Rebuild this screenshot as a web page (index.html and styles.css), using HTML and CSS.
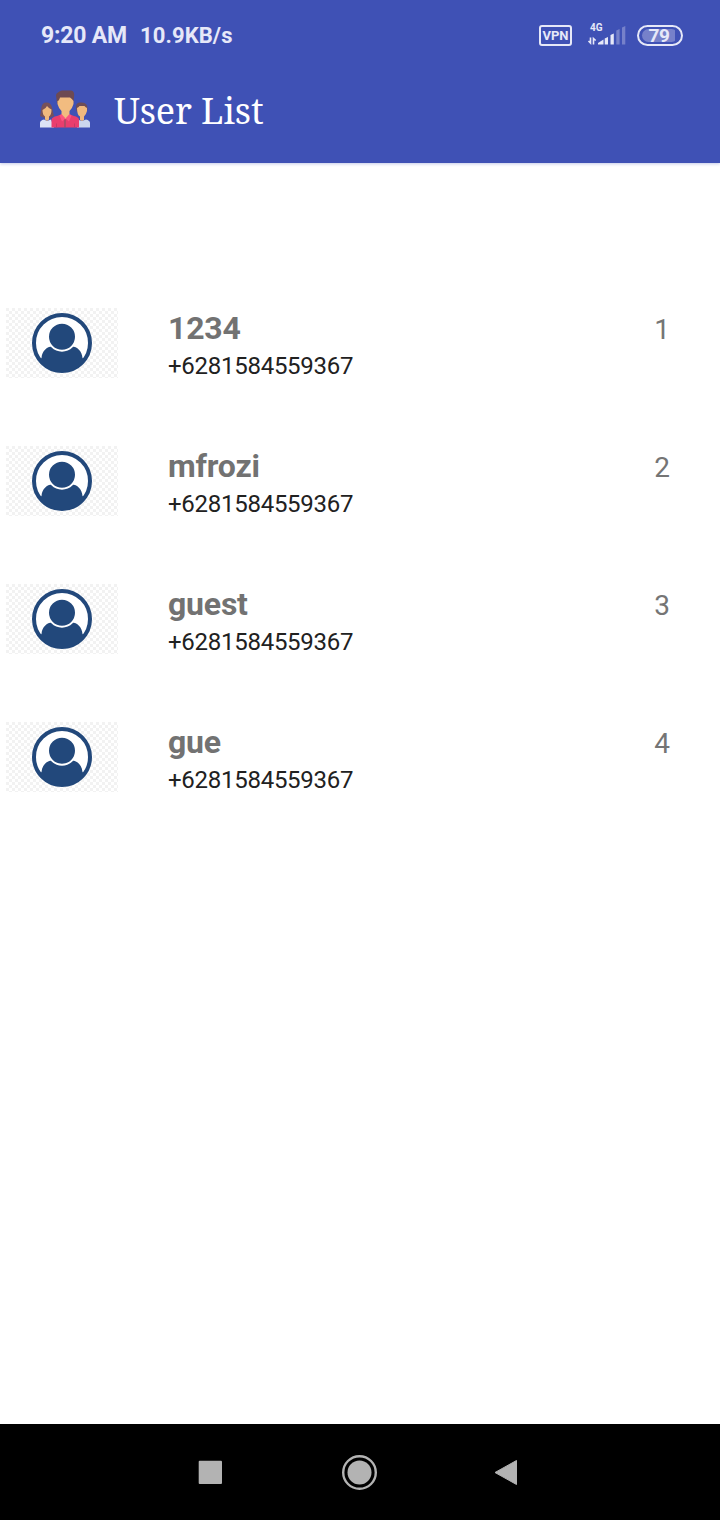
FILE: index.html
```html
<!DOCTYPE html>
<html lang="en">
<head>
<meta charset="utf-8">
<title>User List</title>
<link rel="stylesheet" href="styles.css">
</head>
<body>
<svg class="defs" aria-hidden="true">
  <defs>
    <pattern id="checks" width="6" height="6" patternUnits="userSpaceOnUse">
      <path d="M0 0h3v3H0zM3 3h3v3H3z" fill="#f2f2f2"/>
    </pattern>
    <clipPath id="disc"><circle cx="56" cy="35" r="29"/></clipPath>
    <symbol id="avatar" viewBox="0 0 112 70">
      <rect width="112" height="70" fill="url(#checks)"/>
      <circle cx="56" cy="35" r="28" fill="#fff" stroke="#22487b" stroke-width="4"/>
      <path clip-path="url(#disc)" d="M35.500 50C36 43 41 38.500 46 38.500Q50 38.500 56 41Q62 38.500 66 38.500C71 38.500 76 43 76.500 50L82 55V66H30V55z" fill="#22487b"/>
      <circle cx="56" cy="28.700" r="14" fill="#22487b" stroke="#fff" stroke-width="2"/>
    </symbol>
  </defs>
</svg>
<div class="screen">
  <header class="top">
    <div class="status">
      <span class="clock">9:20 AM</span>
      <span class="speed">10.9KB/s</span>
      <div class="indicators">
        <span class="vpn">VPN</span>
        <div class="network">
          <span class="gen">4G</span>
          <svg class="signal" width="38" height="20" viewBox="0 0 38 20">
            <path d="M0.500 14L2.500 16V10.500M5.500 17.500V11.500L7.700 13.500" fill="none" stroke="#e6e8f8" stroke-width="1.600"/>
            <path d="M10 17.500V16L15.500 12.500V17.500z" fill="#e6e8f8"/>
            <path d="M16.700 11.500L20 10V17.500H16.700zM22.500 8L25.800 6.500V17.500H22.500z" fill="#e6e8f8"/>
            <path d="M28.300 3.500L31.600 2V17.500H28.300zM34 0.500L37.300 -1V17.500H34z" fill="#7681ca"/>
          </svg>
        </div>
        <div class="battery"><span class="level">79</span></div>
      </div>
    </div>
    <div class="toolbar">
      <svg class="logo" width="52" height="40" viewBox="0 0 52 40">
        <path d="M1 37.500V33Q1 30.500 5 29.500L8 31L12 29.500L15 37.500z" fill="#dbe3f6"/>
        <path d="M38 37.500V29.500L43 31L47 29.500Q51 30.500 51 33V37.500z" fill="#cbd6ef"/>
        <path d="M1 26C3 20 1 12.500 7.500 12.500C14 12.500 13 20 15 26Q8 30 1 26z" fill="#77515a"/>
        <path d="M3.500 20Q7 18.500 8 16Q10 18.500 12.500 19.500Q12.500 25 10 26.500V29.500L8 31L6 29.500V26.500Q3.500 25 3.500 20z" fill="#f0b97e"/>
        <path d="M37.500 21L37 17Q37 12.500 41 12.500Q49 11.500 48.500 19L47.500 22H38.500z" fill="#6d4d57"/>
        <path d="M38 18Q40 17 40.500 16H45.500Q46 17 48 18V21Q47 25 45 26.500V30L43 31L41 30V26.500Q38 25 38 18z" fill="#f0b97e"/>
        <path d="M18 13L17 5Q18 2 23 0.500H32Q36 1 35 7L34 15H19z" fill="#6d4a53"/>
        <path d="M12.500 37.500V29.500Q13 27 18 26L22 24.500L26.500 27.500L31 24.500L35 26Q39.500 27 40 29.500V37.500z" fill="#e93e6e"/>
        <path d="M18.500 11Q20 11 21 7.500H31Q33 8.500 34.500 11V14Q33.500 18 30.500 21V25.500L26.500 29L22.500 25.500V21Q19.500 18 18.500 14z" fill="#f2bc80"/>
        <path d="M22.500 24L26.500 28.500L23 31.500L20.500 25.500zM30.500 24L26.500 28.500L30 31.500L32.500 25.500z" fill="#fb557f"/>
        <path d="M26 29.500V37.500" stroke="#8b5363" stroke-width="1.200"/>
        <path d="M17.500 33.500V37.500M35.500 33.500V37.500" stroke="#c23b66"/>
      </svg>
      <h1 class="title">User List</h1>
    </div>
  </header>
  <main class="list">
    <article class="user"><svg class="avatar"><use href="#avatar"/></svg><div class="info"><h2 class="name">1234</h2><p class="phone">+6281584559367</p></div><span class="index">1</span></article>
    <article class="user"><svg class="avatar"><use href="#avatar"/></svg><div class="info"><h2 class="name">mfrozi</h2><p class="phone">+6281584559367</p></div><span class="index">2</span></article>
    <article class="user"><svg class="avatar"><use href="#avatar"/></svg><div class="info"><h2 class="name">guest</h2><p class="phone">+6281584559367</p></div><span class="index">3</span></article>
    <article class="user"><svg class="avatar"><use href="#avatar"/></svg><div class="info"><h2 class="name">gue</h2><p class="phone">+6281584559367</p></div><span class="index">4</span></article>
  </main>
  <nav class="navbar">
    <svg width="36" height="36" viewBox="0 0 36 36"><rect x="6.700" y="6.700" width="23.300" height="23.300" rx="1" fill="#b3b3b3"/></svg>
    <svg width="36" height="36" viewBox="0 0 36 36"><circle cx="18.500" cy="18.500" r="16.300" fill="none" stroke="#b3b3b3" stroke-width="2.400"/><circle cx="18.500" cy="18.500" r="12" fill="#b3b3b3"/></svg>
    <svg width="36" height="36" viewBox="0 0 36 36"><path d="M5 18.500L26.500 6.500V30.500z" fill="#b3b3b3" stroke="#b3b3b3" stroke-linejoin="round"/></svg>
  </nav>
</div>
</body>
</html>
```
FILE: styles.css
```css
* { box-sizing: border-box; }
body { margin: 0; font-family: Roboto, "Liberation Sans", sans-serif; background: #fff; }
h1, h2, p { margin: 0; }
.defs { display: block; width: 0; height: 0; }
.screen { width: 720px; height: 1520px; display: flex; flex-direction: column; overflow: hidden; }
.top { height: 163px; background: #3f51b5; box-shadow: 0 1px 3px rgba(63, 81, 181, 0.3); }
.status { display: flex; align-items: center; height: 70px; padding: 0 37px 0 41px; color: #e6e8f8; font-weight: 700; }
.clock { font-size: 23px; width: 99px; letter-spacing: -0.2px; white-space: nowrap; }
.speed { font-size: 22px; letter-spacing: 0.1px; white-space: nowrap; }
.indicators { display: flex; align-items: center; margin-left: auto; }
.vpn { width: 33px; height: 21px; border: 2px solid #e6e8f8; border-radius: 3px; font-size: 13px; line-height: 18px; text-align: center; }
.network { display: flex; flex-direction: column; width: 38px; height: 24px; margin: 0 11px 0 16px; }
.gen { height: 9px; margin-left: 2px; font-size: 10px; line-height: 9px; }
.signal { display: block; margin-top: -5px; overflow: visible; }
.battery { display: flex; width: 46px; height: 21px; padding: 2px 3px; border: 2px solid #e6e8f8; border-radius: 11px; }
.level { flex: 1; padding-right: 2px; background: linear-gradient(90deg, #7681ca 92%, transparent 92%); border-radius: 7px; font-size: 19px; line-height: 13px; text-align: center; letter-spacing: -0.5px; }
.toolbar { display: flex; align-items: center; height: 80px; padding-left: 39px; }
.logo { flex: none; }
.title { margin-left: 23px; padding-top: 1px; color: #fff; font: 400 36px/48px "Noto Serif", "DejaVu Serif Condensed", "DejaVu Serif", serif; font-stretch: condensed; letter-spacing: -0.1px; white-space: nowrap; }
.list { flex: 1; padding-top: 145px; }
.user { display: flex; align-items: flex-start; height: 138px; padding: 0 50px 0 6px; }
.avatar { display: block; width: 112px; height: 70px; }
.info { flex: 1; margin-left: 50px; }
.name { height: 40px; color: #727272; font-size: 32px; line-height: 40px; font-weight: 700; letter-spacing: -0.2px; }
.phone { color: #212121; font-size: 24px; line-height: 36px; letter-spacing: -0.27px; }
.index { color: #757575; font-size: 28px; line-height: 44px; }
.navbar { display: flex; justify-content: center; align-items: center; gap: 113px; height: 96px; padding-right: 2px; background: #000; }
```
